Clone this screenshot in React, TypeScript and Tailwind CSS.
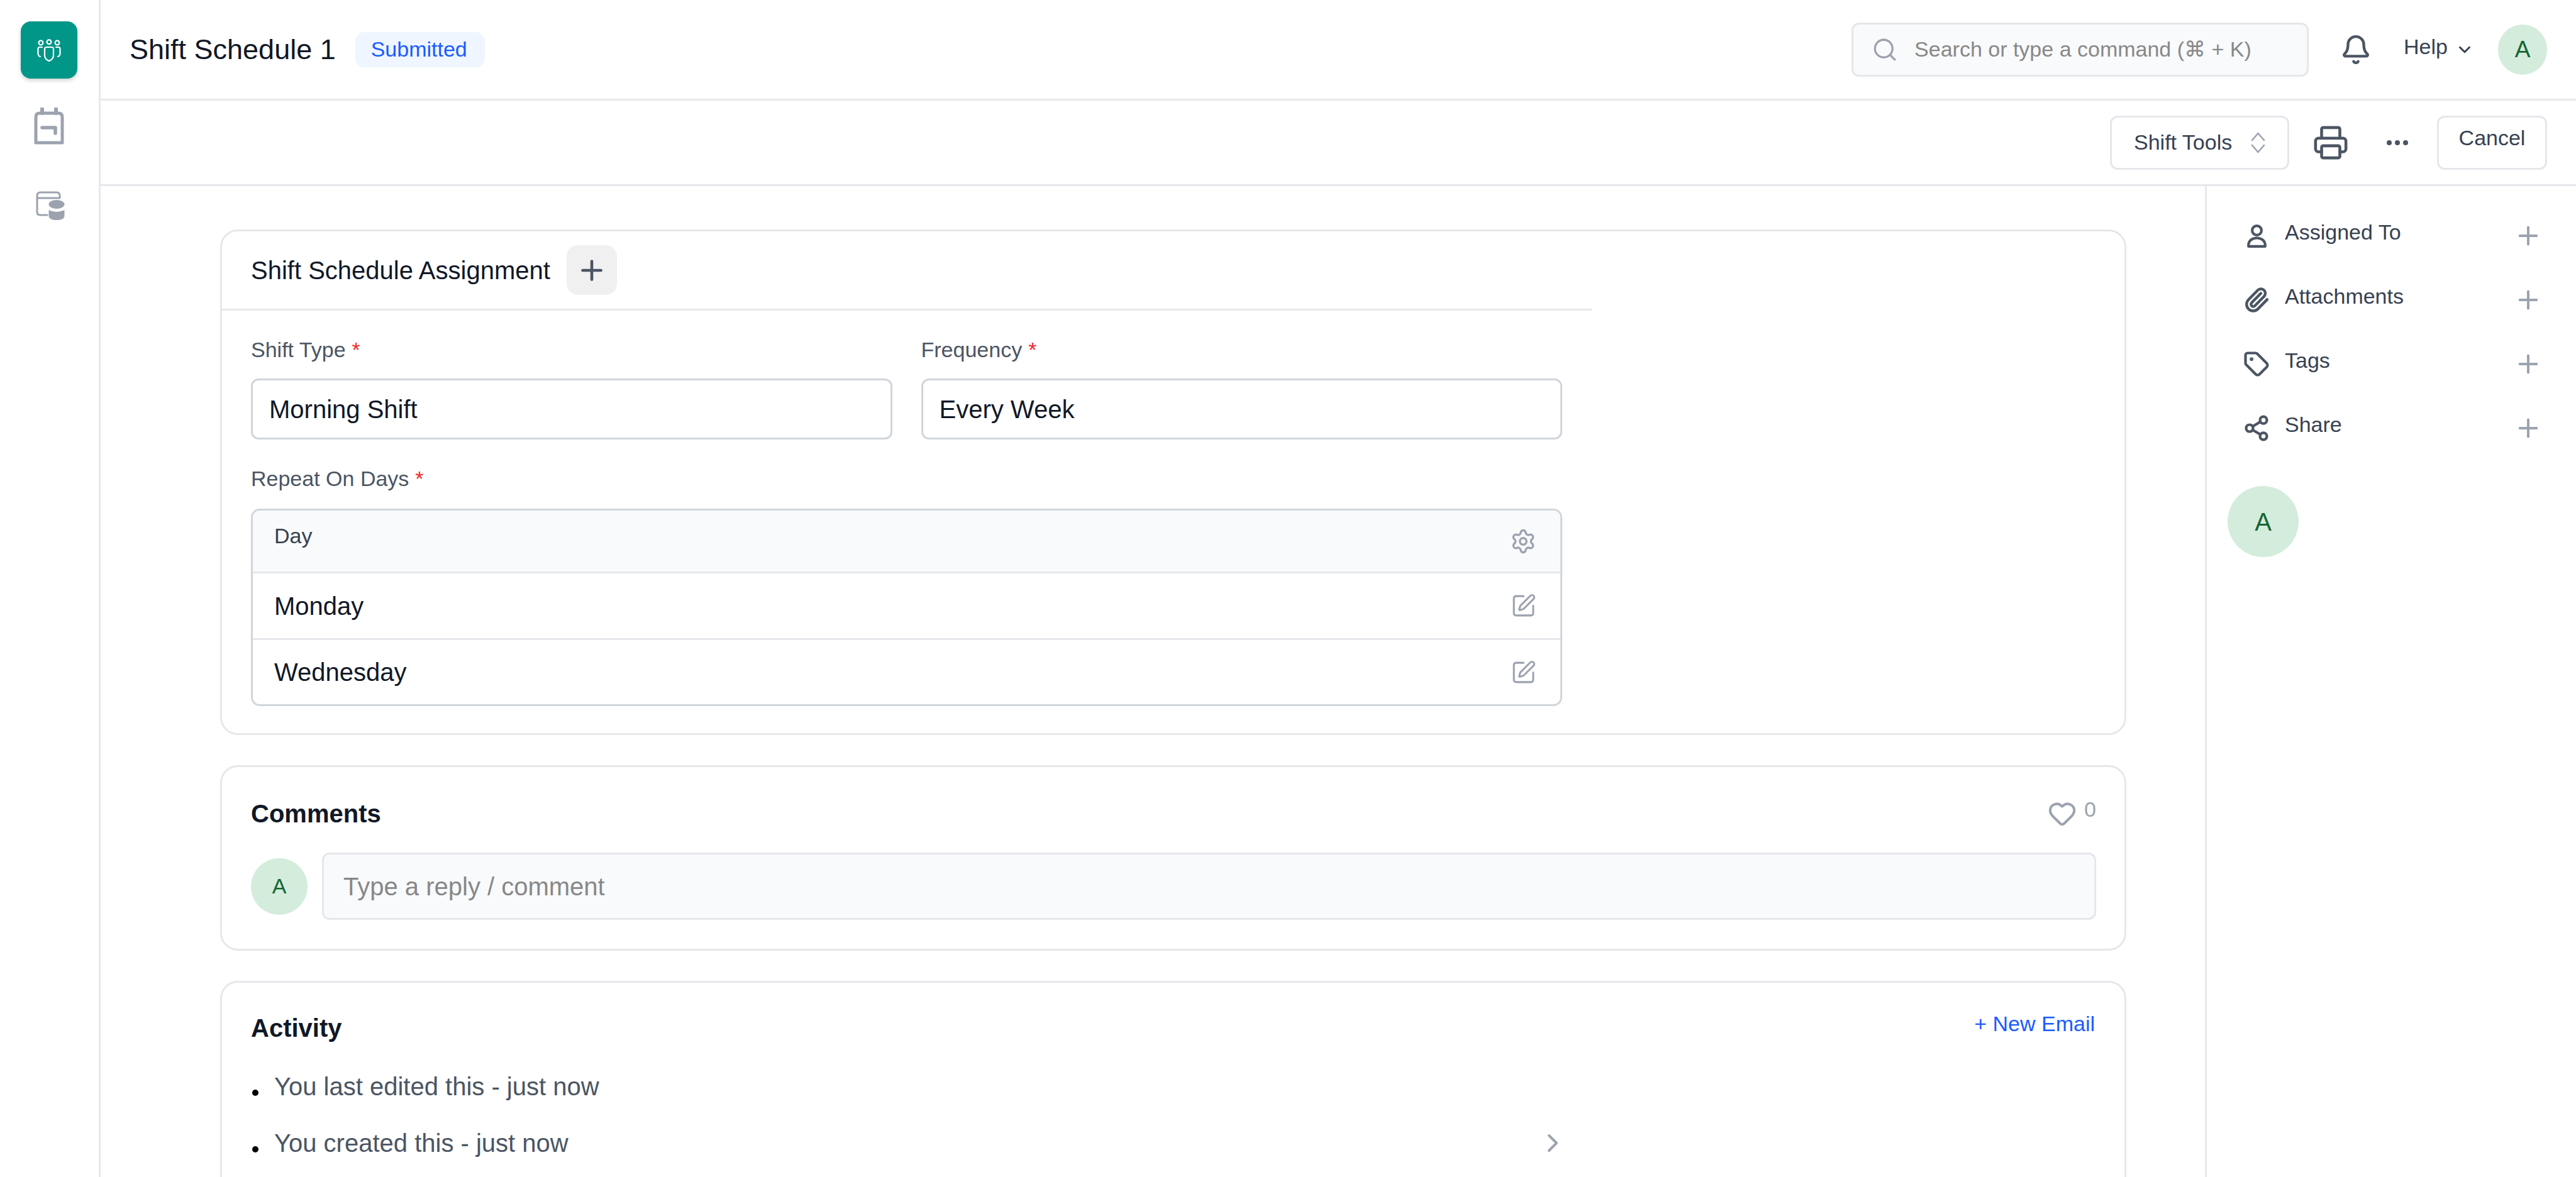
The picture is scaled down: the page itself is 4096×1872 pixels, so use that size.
import { Bell, ChevronDown, ChevronRight, Heart, Paperclip, Plus, Printer, Search, Settings, Share2, SquarePen, Tag } from "lucide-react";

const TeamIcon = () => (
  <svg width="38" height="36" viewBox="0 0 38 36" fill="none" stroke="#fff" strokeWidth="2.2" strokeLinecap="round" strokeLinejoin="round">
    <circle cx="6" cy="6" r="3.4" />
    <circle cx="19" cy="4.8" r="3.4" />
    <circle cx="32" cy="6" r="3.4" />
    <path d="M12 16 Q12 13 15 13 H23 Q26 13 26 16 V26 Q26 32 19 35 Q12 32 12 26 Z" />
    <path d="M8 13 H4 Q1.5 13 1.5 16 V23 Q1.5 27 5 28" />
    <path d="M30 13 H34 Q36.5 13 36.5 16 V23 Q36.5 27 33 28" />
  </svg>
);

const BagIcon = () => (
  <svg width="48" height="59" viewBox="0 0 48 59" fill="none" stroke="#9ca3af" strokeWidth="5" strokeLinecap="round" strokeLinejoin="round">
    <path d="M3 15 Q3 9 9 9 H39 Q45 9 45 15 V56 H3 Z" />
    <path d="M13 2 V9 M35 2 V9" strokeWidth="6" />
    <path d="M13 32 H34 V41" strokeWidth="5.5" />
  </svg>
);

const DataIcon = () => (
  <svg width="46" height="46" viewBox="0 0 46 46" fill="none" stroke="#9ca3af" strokeWidth="3" strokeLinecap="round" strokeLinejoin="round">
    <path d="M18 38 H7 Q2 38 2 33 V7 Q2 2 7 2 H33 Q38 2 38 7 V11 M2 11 H38" />
    <ellipse cx="33" cy="21" rx="12.5" ry="7" fill="#9ca3af" stroke="none" />
    <path d="M20.5 30 Q33 36 45.5 30 V39 Q45.5 46 33 46 Q20.5 46 20.5 39 Z" fill="#9ca3af" stroke="none" />
  </svg>
);

const PersonIcon = () => (
  <svg width="31" height="37" viewBox="0 0 31 37" fill="none" stroke="#4b5563" strokeWidth="4.2" strokeLinejoin="round">
    <circle cx="15.5" cy="9.5" r="7.4" />
    <path d="M2.2 34.8 V33 C2.2 26 8 21.5 15.5 21.5 C23 21.5 28.8 26 28.8 33 V34.8 Z" />
  </svg>
);

const StepperIcon = () => (
  <svg width="23" height="34" viewBox="0 0 23 34" fill="none" stroke="#9ca3af" strokeWidth="2.6" strokeLinecap="round" strokeLinejoin="round">
    <path d="M2 13 L11.5 2 L21 13 M2 21 L11.5 32 L21 21" />
  </svg>
);

const Dots = () => (
  <svg width="34" height="8" viewBox="0 0 34 8" fill="#4b5563">
    <circle cx="4" cy="4" r="4" />
    <circle cx="17" cy="4" r="4" />
    <circle cx="30" cy="4" r="4" />
  </svg>
);

const Avatar = ({ className }: { className: string }) => (
  <div className={`flex shrink-0 items-center justify-center rounded-full bg-[#d4ecdc] text-[#166534] ${className}`}>A</div>
);

const Required = () => <span className="ml-[10px] text-[#ef2b2b]">*</span>;

const sideItems = [
  { label: "Assigned To", icon: <PersonIcon /> },
  { label: "Attachments", icon: <Paperclip size={42} strokeWidth={2.5} color="#4b5563" className="shrink-0" /> },
  { label: "Tags", icon: <Tag size={42} strokeWidth={2.4} color="#4b5563" className="shrink-0" /> },
  { label: "Share", icon: <Share2 size={44} strokeWidth={2.3} color="#4b5563" className="shrink-0" /> },
];

const App = () => {
  return (
    <div className="flex h-[1872px] w-[4096px] overflow-hidden bg-white font-['Liberation_Sans',Arial,sans-serif]">
      <aside className="flex w-[160px] shrink-0 flex-col items-center border-r-[3px] border-[#e5e7eb] pt-[34px] pr-[2px]">
        <div className="flex h-[91px] w-[90px] items-center justify-center rounded-[16px] bg-[#009688] shadow-[0_3px_6px_rgba(0,0,0,0.18)]">
          <TeamIcon />
        </div>
        <div className="mt-[46px]">
          <BagIcon />
        </div>
        <div className="mt-[74px] ml-[5px]">
          <DataIcon />
        </div>
      </aside>

      <div className="flex min-w-0 flex-1 flex-col">
        <header className="flex h-[160px] shrink-0 items-center border-b-[3px] border-[#e5e7eb] pr-[46px] pl-[46px]">
          <h1 className="text-[45px] leading-none text-[#111827]">Shift Schedule 1</h1>
          <span className="ml-[31px] flex h-[56px] w-[206px] items-center justify-center rounded-[14px] bg-[#eff6ff] pr-[3px] text-[34px] text-[#1a5cff]">
            Submitted
          </span>
          <div className="ml-auto flex h-[86px] w-[727px] items-center rounded-[12px] border-[3px] border-[#e5e7eb] bg-[#f9fafb] pl-[29px]">
            <Search size={42} strokeWidth={1.9} color="#9ca3af" />
            <span className="ml-[26px] text-[34px] text-[#888888]">Search or type a command (⌘ + K)</span>
          </div>
          <div className="ml-[50px]">
            <Bell size={50} strokeWidth={2.1} color="#4b5563" />
          </div>
          <span className="mb-[8px] ml-[51px] text-[34px] text-[#374151]">Help</span>
          <ChevronDown size={30} strokeWidth={2.4} color="#374151" className="ml-[12px]" />
          <Avatar className="ml-[38px] h-[80px] w-[78px] text-[37px]" />
        </header>

        <div className="flex h-[136px] shrink-0 items-center justify-end border-b-[3px] border-[#e5e7eb] pr-[46px]">
          <div className="flex h-[86px] w-[285px] items-center rounded-[12px] border-[3px] border-[#e5e7eb] pl-[35px]">
            <span className="text-[34px] text-[#374151]">Shift Tools</span>
            <span className="ml-[30px]">
              <StepperIcon />
            </span>
          </div>
          <Printer size={58} strokeWidth={1.9} color="#4b5563" className="ml-[37px]" />
          <span className="ml-[60px]">
            <Dots />
          </span>
          <div className="ml-[46px] flex h-[86px] w-[175px] items-center justify-center rounded-[12px] border-[3px] border-[#e5e7eb] pb-[14px]">
            <span className="text-[34px] text-[#374151]">Cancel</span>
          </div>
        </div>

        <div className="flex min-h-0 flex-1">
          <main className="flex min-w-0 flex-1 flex-col gap-[48px] overflow-hidden pt-[69px] pr-[125px] pl-[190px]">
            <section className="h-[804px] shrink-0 rounded-[28px] border-[3px] border-[#e5e7eb]">
              <div className="w-[2178px]">
                <div className="flex h-[126px] items-center border-b-[3px] border-[#e5e7eb] pl-[46px]">
                  <h2 className="text-[40px] text-[#111827]">Shift Schedule Assignment</h2>
                  <button className="ml-[26px] flex h-[79px] w-[80px] items-center justify-center rounded-[18px] bg-[#f0f0f0]">
                    <Plus size={50} strokeWidth={2.2} color="#4b5563" />
                  </button>
                </div>
                <div className="pt-[42px] pr-[47px] pl-[46px]">
                  <div className="grid grid-cols-2 gap-x-[46px]">
                    <div>
                      <label className="block h-[40px] text-[34px] leading-[40px] text-[#4b5563]">
                        Shift Type<Required />
                      </label>
                      <div className="mt-[26px] flex h-[97px] items-center rounded-[12px] border-[3px] border-[#d1d5db] pl-[26px] text-[40px] text-[#111827]">
                        Morning Shift
                      </div>
                    </div>
                    <div>
                      <label className="block h-[40px] text-[34px] leading-[40px] text-[#4b5563]">
                        Frequency<Required />
                      </label>
                      <div className="mt-[26px] flex h-[97px] items-center rounded-[12px] border-[3px] border-[#d1d5db] pl-[26px] text-[40px] text-[#111827]">
                        Every Week
                      </div>
                    </div>
                  </div>
                  <label className="mt-[42px] block h-[40px] text-[34px] leading-[40px] text-[#4b5563]">
                    Repeat On Days<Required />
                  </label>
                  <div className="mt-[28px] overflow-hidden rounded-[14px] border-[3px] border-[#d1d5db]">
                    <div className="flex h-[100px] items-center justify-between border-b-[3px] border-[#e5e7eb] bg-[#f9fafb] pr-[38px] pl-[34px]">
                      <span className="mb-[16px] text-[34px] text-[#374151]">Day</span>
                      <Settings size={42} strokeWidth={1.9} color="#9ca3af" />
                    </div>
                    <div className="flex h-[106px] items-center justify-between border-b-[3px] border-[#e5e7eb] pr-[38px] pl-[34px]">
                      <span className="text-[40px] text-[#111827]">Monday</span>
                      <SquarePen size={41} strokeWidth={1.8} color="#9ca3af" />
                    </div>
                    <div className="flex h-[102px] items-center justify-between pr-[38px] pl-[34px]">
                      <span className="text-[40px] text-[#111827]">Wednesday</span>
                      <SquarePen size={41} strokeWidth={1.8} color="#9ca3af" />
                    </div>
                  </div>
                </div>
              </div>
            </section>

            <section className="h-[295px] shrink-0 rounded-[28px] border-[3px] border-[#e5e7eb] pt-[46px] pr-[45px] pl-[46px]">
              <div className="flex h-[56px] items-center justify-between">
                <h3 className="text-[40px] font-bold text-[#111827]">Comments</h3>
                <div className="flex items-center">
                  <Heart size={46} strokeWidth={2.1} color="#9ca3af" />
                  <span className="mb-[14px] ml-[12px] text-[34px] text-[#9ca3af]">0</span>
                </div>
              </div>
              <div className="mt-[34px] flex items-center gap-[23px]">
                <Avatar className="h-[90px] w-[90px] text-[34px]" />
                <div className="flex h-[107px] flex-1 items-center rounded-[12px] border-[3px] border-[#e5e7eb] bg-[#f9fafb] pl-[31px] text-[40px] text-[#888888]">
                  Type a reply / comment
                </div>
              </div>
            </section>

            <section className="h-[500px] shrink-0 rounded-[28px] border-[3px] border-[#e5e7eb] pt-[44px] pr-[45px] pl-[46px]">
              <div className="flex h-[56px] items-center justify-between">
                <h3 className="text-[40px] font-bold text-[#111827]">Activity</h3>
                <a className="mr-[2px] mb-[14px] text-[34px] text-[#1a5cff]">+ New Email</a>
              </div>
              <ul className="mt-[20px] w-[2094px]">
                <li className="flex h-[90px] items-center">
                  <span className="mt-[20px] ml-[2px] h-[10px] w-[10px] rounded-full bg-black" />
                  <span className="ml-[25px] text-[40px] text-[#4b5563]">You last edited this - just now</span>
                </li>
                <li className="flex h-[90px] items-center">
                  <span className="mt-[20px] ml-[2px] h-[10px] w-[10px] rounded-full bg-black" />
                  <span className="ml-[25px] text-[40px] text-[#4b5563]">You created this - just now</span>
                  <ChevronRight size={48} strokeWidth={2} color="#9ca3af" className="ml-auto" />
                </li>
              </ul>
            </section>
          </main>

          <aside className="w-[590px] shrink-0 border-l-[3px] border-[#e5e7eb] pt-[28px]">
            {sideItems.map((item) => (
              <div key={item.label} className="flex h-[102px] items-center pr-[53px] pl-[59px]">
                <div className="flex w-[40px] items-center justify-center">{item.icon}</div>
                <span className="mb-[12px] ml-[25px] text-[34px] text-[#374151]">{item.label}</span>
                <Plus size={46} strokeWidth={2.1} color="#9ca3af" className="ml-auto" />
              </div>
            ))}
            <Avatar className="mt-[41px] ml-[33px] h-[113px] w-[113px] text-[40px]" />
          </aside>
        </div>
      </div>
    </div>
  );
};

export default App;
